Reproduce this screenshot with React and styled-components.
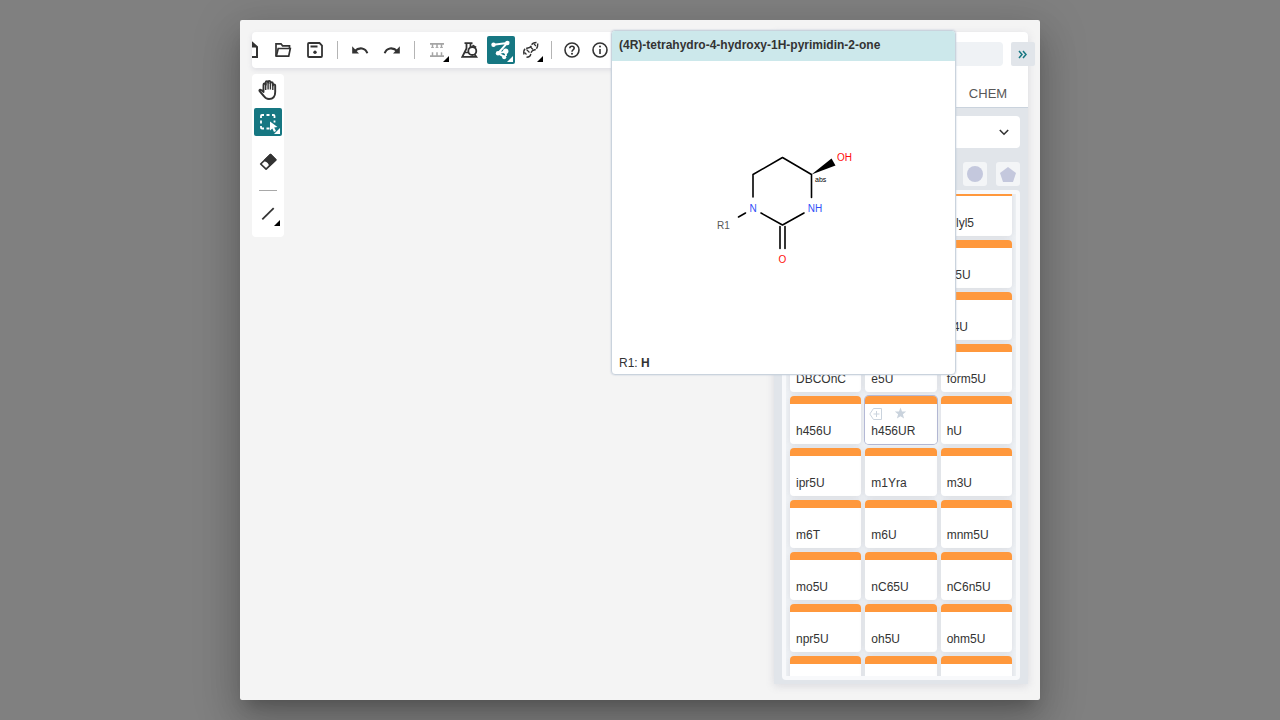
import React from "react";
import styled, { createGlobalStyle, css } from "styled-components";

const teal = "#167782";
const ink = "#333333";

const GlobalStyle = createGlobalStyle`
  *, *::before, *::after { box-sizing: border-box; }
  body {
    margin: 0;
    background: #808080;
    color: ${ink};
    font-family: "Liberation Sans", Arial, sans-serif;
    font-size: 12px;
  }
  button, input, select { font: inherit; color: inherit; }
`;

const Page = styled.div`
  display: flex;
  justify-content: center;
  height: 100vh;
  padding: 20px;
  overflow: hidden;
`;

const Dialog = styled.main`
  position: relative;
  display: flex;
  width: 100%;
  max-width: 800px;
  padding: 12px 12px 16px;
  border-radius: 2px;
  background: #f4f4f4;
  box-shadow:
    0 11px 15px -7px rgba(0, 0, 0, 0.2),
    0 24px 38px 3px rgba(0, 0, 0, 0.14),
    0 9px 46px 8px rgba(0, 0, 0, 0.12);
`;

const Workspace = styled.div`
  display: flex;
  flex: 1;
  flex-direction: column;
  align-items: flex-start;
  min-width: 0;
`;

const TopBar = styled.header`
  display: flex;
  align-items: center;
  width: 100%;
  height: 36px;
  overflow: hidden;
  border-radius: 4px 0 0 4px;
  background: #fff;
  box-shadow: 0 2px 5px rgba(103, 104, 132, 0.15);
`;

const ToolGroup = styled.div`
  display: flex;
  flex: none;
  gap: ${(p) => p.$gap ?? 4}px;
  margin-left: ${(p) => p.$shift ?? 0}px;
`;

const TopDivider = styled.span`
  flex: none;
  width: 1px;
  height: 18px;
  margin: 0 ${(p) => p.$space ?? 8}px;
  background: #b4b4b4;
`;

const ToolButton = styled.button`
  position: relative;
  display: grid;
  place-items: center;
  flex: none;
  width: 28px;
  height: 28px;
  padding: 0;
  border: 0;
  border-radius: 2px;
  background: ${(p) => (p.$active ? teal : "transparent")};
  color: ${(p) => (p.$active ? "#fff" : p.disabled ? "#a5a5a5" : ink)};
  svg { display: block; }
  ${(p) =>
    p.$more &&
    css`
      &::after {
        content: "";
        position: absolute;
        right: 2px;
        bottom: 2px;
        border-bottom: 6px solid ${p.$active ? "#fff" : "#000"};
        border-left: 6px solid transparent;
      }
    `}
`;

const SideBar = styled.nav`
  display: flex;
  flex-direction: column;
  align-items: center;
  gap: 4px;
  width: 32px;
  margin-top: 6px;
  padding: 2px 2px 9px;
  border-radius: 4px;
  background: #fff;
`;

const SideGroup = styled.div`
  padding-top: 8px;
`;

const SideDivider = styled.span`
  width: 18px;
  height: 1px;
  margin: 10px 0 5px;
  background: #a8a8a8;
`;

const Library = styled.aside`
  display: flex;
  flex: none;
  flex-direction: column;
  width: 254px;
  border-radius: 4px 4px 0 0;
  background: #e1e5ea;
  box-shadow: 0 2px 8px rgba(103, 104, 132, 0.18);
`;

const LibraryHead = styled.div`
  height: 76px;
  border-bottom: 1px solid #cad3dd;
  border-radius: 4px 4px 0 0;
  background: #fff;
`;

const SearchRow = styled.div`
  display: flex;
  gap: 8px;
  margin-right: -7px;
  padding: 10px 0 14px 8px;
`;

const SearchInput = styled.input`
  flex: 1;
  min-width: 0;
  height: 24px;
  border: 0;
  border-radius: 4px;
  background: #eff2f5;
`;

const CollapseButton = styled.button`
  display: grid;
  place-items: center;
  width: 24px;
  height: 24px;
  padding: 0;
  border: 0;
  border-radius: 2px;
  background: #e1e5ea;
  color: ${teal};
`;

const TabRow = styled.div`
  display: flex;
  justify-content: flex-end;
`;

const Tab = styled.button`
  width: 80px;
  height: 27px;
  padding: 0;
  border: 0;
  background: none;
  color: #585858;
  font-size: 13px;
`;

const LibraryBody = styled.div`
  display: flex;
  flex: 1;
  flex-direction: column;
  min-height: 0;
  padding: 8px 8px 4px;
`;

const SelectWrap = styled.div`
  position: relative;
  svg {
    position: absolute;
    right: 11px;
    top: 11px;
    pointer-events: none;
  }
`;

const TypeSelect = styled.select`
  display: block;
  width: 100%;
  height: 32px;
  border: 0;
  border-radius: 4px;
  background: #fff;
  appearance: none;
`;

const ShapeRow = styled.div`
  display: flex;
  justify-content: flex-end;
  gap: 9px;
  padding: 14px 0 4px;
`;

const ShapeButton = styled.button`
  display: grid;
  place-items: center;
  width: 24px;
  height: 24px;
  padding: 0;
  border: 0;
  border-radius: 3px;
  background: #f3f5f7;
  color: #c4c8dd;
`;

const ListBox = styled.div`
  flex: 1;
  min-height: 0;
  padding: 4px;
  border-radius: 4px;
  background: #f8f9fb;
`;

const CardScroller = styled.div`
  display: flex;
  flex-direction: column;
  justify-content: flex-end;
  height: 100%;
  overflow: hidden;
  background: #eff2f5;
`;

const CardGrid = styled.div`
  display: grid;
  grid-template-columns: repeat(3, 1fr);
  gap: 4px;
  margin-bottom: -28px;
  padding: 0 4px;
`;

const Card = styled.button`
  display: flex;
  flex-direction: column;
  justify-content: space-between;
  height: 48px;
  padding: 11px 6px 6px;
  border: 0;
  border-radius: 4px;
  background: linear-gradient(#ff983c 8px, #fff 8px);
  box-shadow: ${(p) =>
    p.$hovered ? "0 0 0 1px #b4b9d6" : "0 1px 6px rgba(103, 104, 132, 0.16)"};
  line-height: 14px;
  text-align: left;
`;

const CardActions = styled.span`
  display: flex;
  gap: 11px;
  height: 14px;
  margin-left: -2px;
  color: #cad3dd;
`;

const Preview = styled.section`
  position: absolute;
  top: 10px;
  right: 84px;
  display: flex;
  flex-direction: column;
  width: 345px;
  height: 345px;
  overflow: hidden;
  border: 1px solid #cad3dd;
  border-radius: 4px;
  background: #fff;
  box-shadow: 0 0 1px 1px rgba(180, 190, 210, 0.25);
`;

const PreviewTitle = styled.h1`
  margin: 0;
  padding: 6px 7px 8px;
  background: #cce8eb;
  font-size: 12px;
  line-height: 16px;
`;

const Molecule = styled.svg`
  display: block;
  width: 100%;
  flex: 1;
  min-height: 0;
`;

const Attachment = styled.p`
  margin: 0;
  padding: 0 7px 3px;
  line-height: 16px;
`;

const Icon = ({ size = 20, children, ...rest }) => (
  <svg
    width={size}
    height={size}
    viewBox={`0 0 ${size} ${size}`}
    fill="none"
    stroke="currentColor"
    strokeWidth="1.5"
    aria-hidden="true"
    {...rest}
  >
    {children}
  </svg>
);

const FileIcon = () => (
  <Icon strokeWidth="2">
    <path d="M4 2.500h7L16 7V17H4Z" />
    <path d="M11 2.500v5H16.500Z" fill="currentColor" stroke="none" />
  </Icon>
);
const FolderIcon = () => (
  <Icon strokeWidth="1.700">
    <path d="M3 16V3.800h5l1.600 2h6.900V8" />
    <path d="M3.300 16.200 5.200 8.500H17.300l-1.600 7.700Z" />
  </Icon>
);
const SaveIcon = () => (
  <Icon strokeWidth="1.800">
    <path d="M4 3h10.500L17 5.500V16q0 1-1 1H4q-1 0-1-1V4q0-1 1-1Z" />
    <path d="M5.500 6.500h7" strokeWidth="2" />
    <circle cx="10" cy="12.300" r="1.700" fill="currentColor" stroke="none" />
  </Icon>
);
const UndoIcon = () => (
  <Icon>
    <path d="M4.500 11.300q3.500-3.400 7.500-2.800 4 .7 5.300 4.800" strokeWidth="2.100" />
    <path d="M2.200 6.300V13.500H9Z" fill="currentColor" stroke="none" />
  </Icon>
);
const RedoIcon = () => (
  <Icon>
    <path d="M15.500 11.300q-3.500-3.400-7.500-2.800-4 .7-5.300 4.800" strokeWidth="2.100" />
    <path d="M17.800 6.300V13.500H11Z" fill="currentColor" stroke="none" />
  </Icon>
);
const LayoutIcon = () => (
  <Icon>
    <path d="M3 3.800h14M3 16.200h14" strokeWidth="1.700" />
    <path d="M5.500 4v3.800M10 4v3.800M14.500 4v3.800M5.500 16v-3.800M10 16v-3.800M14.500 16v-3.800" strokeWidth="1.500" />
    <path d="M4 7.500h3M8.500 7.500h3M13 7.500h3" strokeWidth=".8" />
  </Icon>
);
const FlaskIcon = () => (
  <Icon strokeWidth="1.800">
    <path d="M5.500 3.200h8M7.500 3.500v5L3.300 16.800h14L15.700 14.500M11.500 3.500v3.500" />
    <circle cx="13.300" cy="11" r="4" />
    <path d="M5.800 12.500h4M13.500 5.200 17.200 7.500" strokeWidth="1.500" />
  </Icon>
);
const SnakeIcon = () => (
  <Icon size={24}>
    <path d="M4.300 6.700 18.300 5 9 15.300 16 19.200M16.700 13.300 17 18M9 15.300 16.700 13.300" strokeWidth="1.900" />
    <g fill="currentColor" stroke="none">
      <circle cx="4.500" cy="6.700" r="2.200" />
      <circle cx="18.300" cy="5" r="2.200" />
      <circle cx="9" cy="15.300" r="2.200" />
      <circle cx="16.700" cy="13.300" r="2.700" />
      <circle cx="15.200" cy="19.300" r="2" />
    </g>
  </Icon>
);
const DnaIcon = () => (
  <Icon>
    <g strokeWidth="1.400">
      <path d="M3 14.500q-1.200-5.500 3-6.300 4-.5 4.500-3Q11.300 2.500 15.500 2.500" strokeDasharray="6 1" />
      <path d="M5.500 17.200q4 0 4.300-3.500.4-3 3.200-3.700 4-.8 3.800-6.500" strokeDasharray="6 1" />
      <path d="M3.500 12.500 5.500 14.500M5.500 9.500 8.500 12.500M9.500 7l2.500 2.500M13 4l2 2" strokeWidth="1.200" />
    </g>
  </Icon>
);
const HelpIcon = () => (
  <Icon>
    <circle cx="10" cy="10" r="7" strokeWidth="1.600" />
    <path d="M7.800 8.300q.1-2.100 2.200-2.100t2.200 1.900q0 1-1.100 1.800T10 11.700" strokeWidth="1.600" />
    <circle cx="10" cy="13.700" r="1" fill="currentColor" stroke="none" />
  </Icon>
);
const InfoIcon = () => (
  <Icon strokeWidth="1.600">
    <circle cx="10" cy="10" r="7" />
    <path d="M10 9v5" />
    <circle cx="10" cy="6.500" r="1" fill="currentColor" stroke="none" />
  </Icon>
);
const HandIcon = () => (
  <Icon size={24}>
    <path
      d="M7.500 14V6.700q0-1.200 1.100-1.200t1.100 1.200V4.500q0-1.200 1.200-1.200t1.200 1.200V4q0-1.100 1.100-1.100T14.400 4v1.200q0-1.100 1.200-1.100t1.200 1.100V7.500q0-1.100 1.200-1.100t1.200 1.100V14q0 7-6.200 7-3.200 0-5.200-3L3.600 13.200q-.6-1.200.5-1.500 1.400-.2 3.400 2.300Z"
      strokeWidth="1.900"
      strokeLinejoin="round"
    />
    <path d="M9.700 5v7M12.100 4.500V11.500M14.400 4.500V11.500M16.800 6v6" strokeWidth="1.400" />
  </Icon>
);
const SelectIcon = () => (
  <Icon size={24}>
    <path
      d="M5 8V6q0-1 1-1h2M10.500 5h3M16 5h1.500q1 0 1 1v2M18.500 10.500v2M5 10.500v3M5 16v1.500q0 1 1 1h2M10.500 18.500h3"
      strokeWidth="1.800"
    />
    <path d="M14 11.500 21.500 17l-3.300.6 1.800 3.400-2 1-1.700-3.500L14 20.500Z" fill="currentColor" stroke="none" />
  </Icon>
);
const EraserIcon = () => (
  <Icon strokeWidth="1.700" strokeLinejoin="round">
    <path d="m12.500 2.700 5.200 5.100-9.600 9.400L2.700 12Z" />
    <path d="m12.500 2.700 5.200 5.100-6 5.700q-.2-3.500-5-5.100Z" fill="currentColor" />
  </Icon>
);
const LineIcon = () => (
  <Icon>
    <path d="M4.300 15.300 15.700 4.200" strokeWidth="1.800" />
  </Icon>
);
const StarIcon = () => (
  <Icon size={14} fill="currentColor" stroke="none">
    <path d="m6.500.5 1.500 3.900 4.200.2-3.300 2.700 1.200 4.200-3.600-2.300L2.900 11.500l1.200-4.200L.8 4.600 5 4.400Z" />
  </Icon>
);
const AddTagIcon = () => (
  <Icon size={14} strokeWidth="1">
    <path d="M4.500 1.500h8v11h-8L.8 7Z" strokeLinejoin="round" />
    <path d="M7.500 4v6M4.500 7h6" />
  </Icon>
);

const rows = [
  ["", "", "allyl5"],
  ["", "", "cl5U"],
  ["", "", "c4U"],
  ["DBCOnC", "e5U", "form5U"],
  ["h456U", "h456UR", "hU"],
  ["ipr5U", "m1Yra", "m3U"],
  ["m6T", "m6U", "mnm5U"],
  ["mo5U", "nC65U", "nC6n5U"],
  ["npr5U", "oh5U", "ohm5U"],
  ["", "", ""],
];

const MonomerCard = ({ name, hovered }) => (
  <Card $hovered={hovered}>
    <CardActions>
      {hovered && (
        <>
          <AddTagIcon />
          <StarIcon />
        </>
      )}
    </CardActions>
    {name}
  </Card>
);

const Structure = () => (
  <Molecule viewBox="0 0 343 294" role="img" aria-label="Molecular structure">
    <g stroke="#000" strokeWidth="1.600" strokeLinecap="round" fill="none">
      <path d="M141 136V113.500L170.500 96.500 199.500 113.500V136.500" strokeLinejoin="round" />
      <path d="M149 152 170.500 164 192 152" strokeLinejoin="round" />
      <path d="M168 165.500V187.500M173 165.500V187.500" />
      <path d="M133.500 152 126.500 156" />
    </g>
    <path d="M199.500 113.500 219.500 97.500 223.500 104.500Z" fill="#000" />
    <g fontSize="10" textAnchor="middle">
      <text x="141" y="151" fill="#304ff7">N</text>
      <text x="203" y="151" fill="#304ff7">NH</text>
      <text x="232.500" y="100" fill="#ff0d0d">OH</text>
      <text x="170.500" y="202" fill="#ff0d0d">O</text>
      <text x="111.500" y="168" fill="#585858">R1</text>
    </g>
    <text x="203" y="121" fontSize="7">abs</text>
  </Molecule>
);

export default function App() {
  return (
    <Page>
      <GlobalStyle />
      <Dialog>
        <Workspace>
          <TopBar>
            <ToolGroup $shift={-15}>
              <ToolButton aria-label="New"><FileIcon /></ToolButton>
              <ToolButton aria-label="Open"><FolderIcon /></ToolButton>
              <ToolButton aria-label="Save"><SaveIcon /></ToolButton>
            </ToolGroup>
            <TopDivider />
            <ToolGroup>
              <ToolButton aria-label="Undo"><UndoIcon /></ToolButton>
              <ToolButton aria-label="Redo"><RedoIcon /></ToolButton>
            </ToolGroup>
            <TopDivider />
            <ToolGroup>
              <ToolButton aria-label="Layout" disabled $more><LayoutIcon /></ToolButton>
              <ToolButton aria-label="Calculate"><FlaskIcon /></ToolButton>
              <ToolGroup $gap={2}>
                <ToolButton aria-label="Snake mode" $active $more><SnakeIcon /></ToolButton>
                <ToolButton aria-label="Antisense strand" $more><DnaIcon /></ToolButton>
              </ToolGroup>
            </ToolGroup>
            <TopDivider $space={6} />
            <ToolGroup $gap={0}>
              <ToolButton aria-label="Help"><HelpIcon /></ToolButton>
              <ToolButton aria-label="About"><InfoIcon /></ToolButton>
            </ToolGroup>
          </TopBar>
          <SideBar>
            <ToolButton aria-label="Hand"><HandIcon /></ToolButton>
            <ToolButton aria-label="Select" $active $more><SelectIcon /></ToolButton>
            <SideGroup>
              <ToolButton aria-label="Erase"><EraserIcon /></ToolButton>
            </SideGroup>
            <SideDivider />
            <ToolButton aria-label="Bond" $more><LineIcon /></ToolButton>
          </SideBar>
        </Workspace>

        <Library>
          <LibraryHead>
            <SearchRow>
              <SearchInput type="search" aria-label="Search library" />
              <CollapseButton aria-label="Hide library">
                <Icon size={12} strokeWidth="1.500">
                  <path d="M2 3 5 6.500 2 10M6 3 9 6.500 6 10" />
                </Icon>
              </CollapseButton>
            </SearchRow>
            <TabRow>
              <Tab>CHEM</Tab>
            </TabRow>
          </LibraryHead>
          <LibraryBody>
            <SelectWrap>
              <TypeSelect aria-label="Monomer type" />
              <Icon size={10} strokeWidth="1.600">
                <path d="M.8 3 5 7.200 9.200 3" />
              </Icon>
            </SelectWrap>
            <ShapeRow>
              <ShapeButton aria-label="Bases">
                <Icon size={16} fill="currentColor" stroke="none">
                  <circle cx="8" cy="8" r="8" />
                </Icon>
              </ShapeButton>
              <ShapeButton aria-label="Nucleotides">
                <Icon size={16} fill="currentColor" stroke="none">
                  <path d="M8 1 16 7 13 16H3L0 7Z" />
                </Icon>
              </ShapeButton>
            </ShapeRow>
            <ListBox>
              <CardScroller>
                <CardGrid>
                  {rows.flatMap((row, r) =>
                    row.map((name, c) => (
                      <MonomerCard key={`${r}-${c}`} name={name} hovered={name === "h456UR"} />
                    ))
                  )}
                </CardGrid>
              </CardScroller>
            </ListBox>
          </LibraryBody>
        </Library>

        <Preview>
          <PreviewTitle>(4R)-tetrahydro-4-hydroxy-1H-pyrimidin-2-one</PreviewTitle>
          <Structure />
          <Attachment>
            R1: <strong>H</strong>
          </Attachment>
        </Preview>
      </Dialog>
    </Page>
  );
}
